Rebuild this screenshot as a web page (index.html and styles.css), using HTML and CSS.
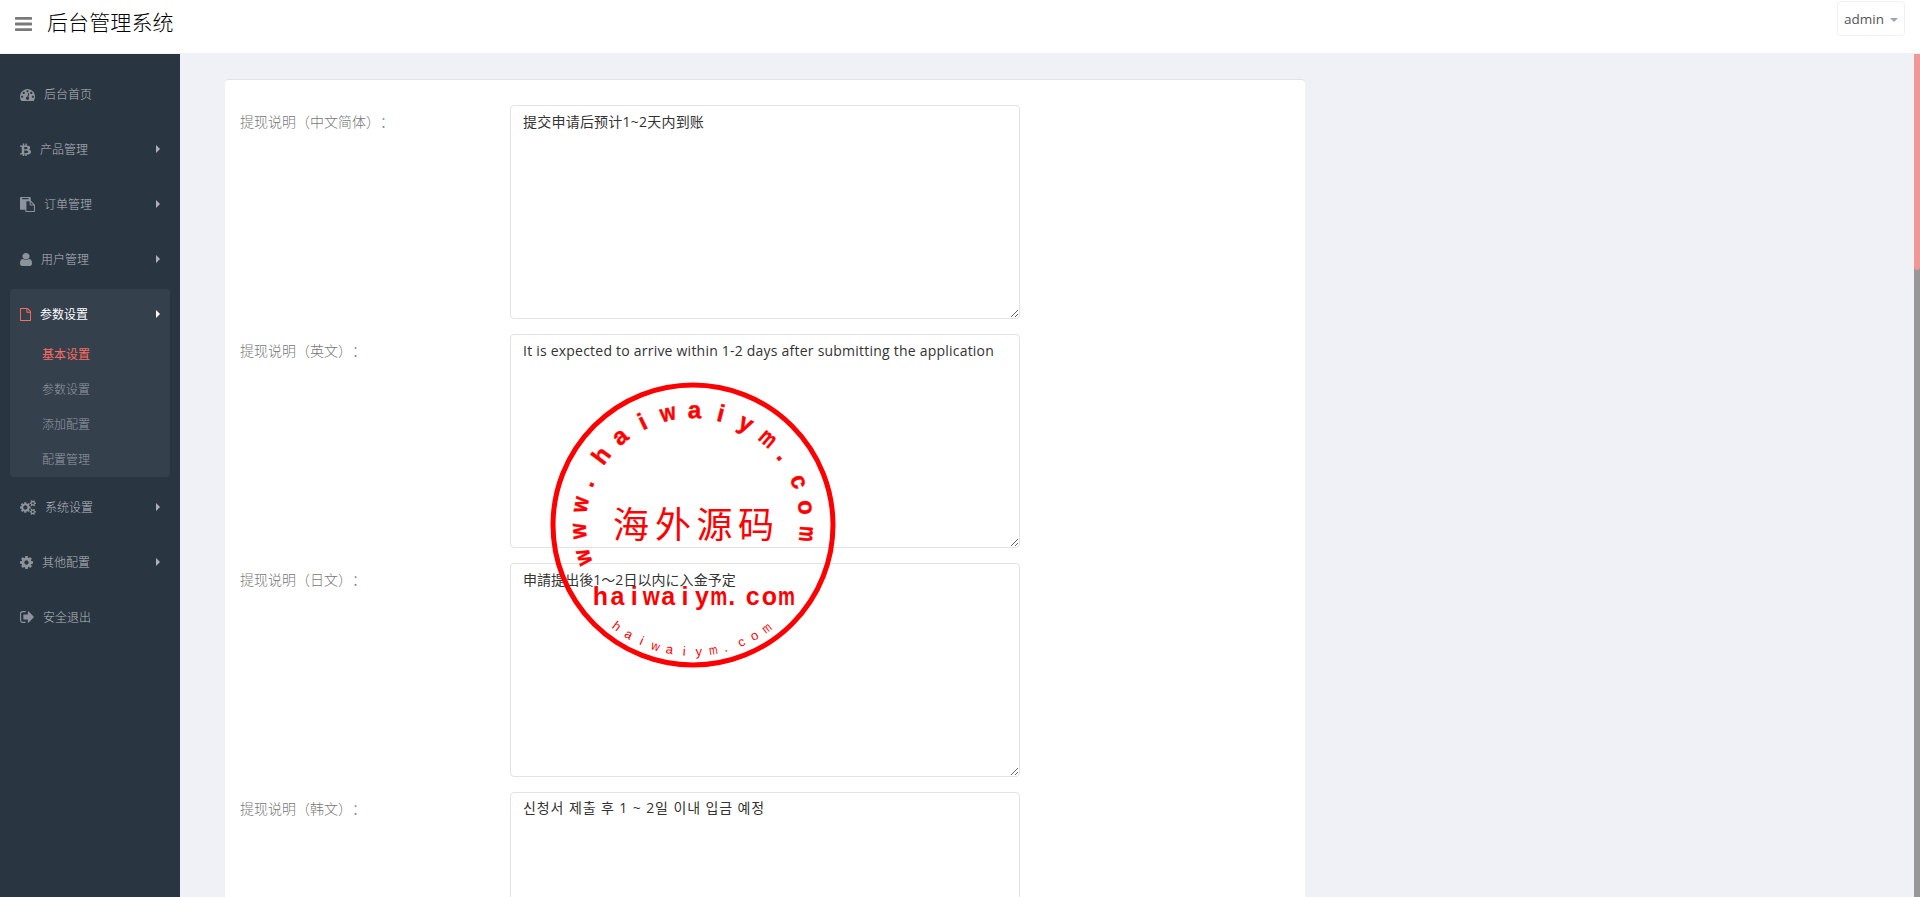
FILE: index.html
```html
<!DOCTYPE html>
<html lang="zh-CN">
<head>
  <meta charset="UTF-8">
  <title>后台管理系统</title>
  <link rel="stylesheet" href="styles.css">
</head>
<body>
  <header class="header">
    <svg class="toggle" viewBox="128 256 1536 1280" preserveAspectRatio="none"><path d="M1664 1344v128q0 26-19 45t-45 19h-1408q-26 0-45-19t-19-45v-128q0-26 19-45t45-19h1408q26 0 45 19t19 45zm0-512v128q0 26-19 45t-45 19h-1408q-26 0-45-19t-19-45v-128q0-26 19-45t45-19h1408q26 0 45 19t19 45zm0-512v128q0 26-19 45t-45 19h-1408q-26 0-45-19t-19-45v-128q0-26 19-45t45-19h1408q26 0 45 19t19 45z"/></svg>
    <div class="logo">后台管理系统</div>
    <div class="user-menu"><span class="username">admin</span><b class="caret"></b></div>
  </header>
  <div class="container">
    <aside class="sidebar">
      <ul class="menu">
        <li><a>
          <svg width="15" height="13" viewBox="0 128 1792 1536" preserveAspectRatio="none"><path d="M384 1152q0-53-37.5-90.5t-90.5-37.5-90.5 37.5-37.5 90.5 37.5 90.5 90.5 37.5 90.5-37.5 37.5-90.5zm192-448q0-53-37.5-90.5t-90.5-37.5-90.5 37.5-37.5 90.5 37.5 90.5 90.5 37.5 90.5-37.5 37.5-90.5zm428 481l101-382q6-26-7.5-48.5t-38.5-29.5-48 6.5-30 39.5l-101 382q-60 5-107 43.5t-63 98.5q-20 77 20 146t117 89 146-20 89-117q16-60-6-117t-72-91zm660-33q0-53-37.5-90.5t-90.5-37.5-90.5 37.5-37.5 90.5 37.5 90.5 90.5 37.5 90.5-37.5 37.5-90.5zm-640-640q0-53-37.5-90.5t-90.5-37.5-90.5 37.5-37.5 90.5 37.5 90.5 90.5 37.5 90.5-37.5 37.5-90.5zm448 192q0-53-37.5-90.5t-90.5-37.5-90.5 37.5-37.5 90.5 37.5 90.5 90.5 37.5 90.5-37.5 37.5-90.5zm320 448q0 261-141 483-19 29-54 29h-1402q-35 0-54-29-141-221-141-483 0-182 71-348t191-286 286-191 348-71 348 71 286 191 191 286 71 348z"/></svg>
          <span>后台首页</span></a></li>
        <li><a>
          <svg width="11" height="14" viewBox="300 0 1192 1792" preserveAspectRatio="none"><path d="M1399 711q18 182-131 258 117 28 175 103t45 214q-7 71-32.5 125t-64.5 89-97 58.5-121.5 34.5-145.5 15v255h-154v-251q-80 0-122-1v252h-154v-255q-18 0-54-.5t-55-.5h-200l31-183h111q50 0 58-51v-402h16q-6-1-16-1v-287q-13-68-89-68h-111v-164l212 1q64 0 97-1v-252h154v247q82-2 122-2v-245h154v252q79 7 140 22.5t113 45 82.5 78 36.5 114.5zm-215 545q0-36-15-64t-37-46-57.5-30.5-65.5-18.5-74-9-69-3-64.5 1-47.5 1v338q8 0 37 .5t48 .5 53-1.5 58.5-4 57-8.5 55.5-14 47.5-21 39.5-30 24.5-40 9.5-51zm-71-476q0-33-12.5-58.5t-30.5-42-48-28-55-16.5-61.5-8-58-2.5-54 1-39.5.5v307q5 0 34.5.5t46.5 0 50-2 55-5.5 51.5-11 48.5-18.5 37-27 27-38.5 9-51z"/></svg>
          <span>产品管理</span><i class="arrow"></i></a></li>
        <li><a>
          <svg width="15" height="15" viewBox="0 0 1792 1792"><path d="M768 1664h896v-640h-416q-40 0-68-28t-28-68v-416h-384v1152zm256-1440v-64q0-13-9.5-22.5t-22.5-9.5h-704q-13 0-22.5 9.5t-9.5 22.5v64q0 13 9.5 22.5t22.5 9.5h704q13 0 22.5-9.5t9.5-22.5zm256 672h299l-299-299v299zm512 128v672q0 40-28 68t-68 28h-960q-40 0-68-28t-28-68v-160h-544q-40 0-68-28t-28-68v-1344q0-40 28-68t68-28h1088q40 0 68 28t28 68v328q21 13 36 28l408 408q28 28 48 76t20 88z"/></svg>
          <span>订单管理</span><i class="arrow"></i></a></li>
        <li><a>
          <svg width="12" height="13" viewBox="256 128 1280 1536" preserveAspectRatio="none"><path d="M1536 1399q0 109-62.5 187t-150.5 78h-854q-88 0-150.5-78t-62.5-187q0-85 8.5-160.5t31.5-152 58.5-131 94-89 134.5-34.5q131 128 313 128t313-128q76 0 134.5 34.5t94 89 58.5 131 31.5 152 8.5 160.5zm-256-887q0 159-112.5 271.5t-271.5 112.5-271.5-112.5-112.5-271.5 112.5-271.5 271.5-112.5 271.5 112.5 112.5 271.5z"/></svg>
          <span>用户管理</span><i class="arrow"></i></a></li>
        <li class="active"><a>
          <svg width="11" height="13" viewBox="128 0 1536 1792" preserveAspectRatio="none"><path d="M1596 380q28 28 48 76t20 88v1152q0 40-28 68t-68 28h-1344q-40 0-68-28t-28-68v-1600q0-40 28-68t68-28h896q40 0 88 20t76 48zm-444-244v376h376q-10-29-22-41l-313-313q-12-12-41-22zm384 1528v-1024h-416q-40 0-68-28t-28-68v-416h-768v1536h1280z"/></svg>
          <span>参数设置</span><i class="arrow"></i></a>
          <ul class="sub">
            <li class="current">基本设置</li>
            <li>参数设置</li>
            <li>添加配置</li>
            <li>配置管理</li>
          </ul>
        </li>
        <li><a>
          <svg width="16" height="15" viewBox="0 0 1920 1792"><path d="M896 896q0-106-75-181t-181-75-181 75-75 181 75 181 181 75 181-75 75-181zm768 512q0-52-38-90t-90-38-90 38-38 90q0 53 37.500 90.500t90.500 37.500 90.500-37.500 37.500-90.500zm0-1024q0-52-38-90t-90-38-90 38-38 90q0 53 37.500 90.500t90.500 37.500 90.500-37.500 37.500-90.500zm-384 421v185q0 10-7 19.500t-16 10.500l-155 24q-11 35-32 76 34 48 90 115 7 11 7 20 0 12-7 19-23 30-82.500 89.500t-78.500 59.500q-11 0-21-7l-115-90q-37 19-77 31-11 108-23 155-7 24-30 24h-186q-11 0-20-7.500t-10-17.500l-23-153q-34-10-75-31l-118 89q-7 7-20 7-11 0-21-8-144-133-144-160 0-9 7-19 10-14 41-53t47-61q-23-44-35-82l-152-24q-10-1-17-9.500t-7-19.500v-185q0-10 7-19.500t16-10.500l155-24q11-35 32-76-34-48-90-115-7-11-7-20 0-12 7-20 22-30 82-89t79-59q11 0 21 7l115 90q34-18 77-32 11-108 23-154 7-24 30-24h186q11 0 20 7.500t10 17.500l23 153q34 10 75 31l118-89q8-7 20-7 11 0 21 8 144 133 144 160 0 8-7 19-12 16-42 54t-45 60q23 48 34 82l152 23q10 2 17 10.500t7 19.500zm640 533v140q0 16-149 31-12 27-30 52 51 113 51 138 0 4-4 7-122 71-124 71-8 0-46-47t-52-68q-20 2-30 2t-30-2q-14 21-52 68t-46 47q-2 0-124-71-4-3-4-7 0-25 51-138-18-25-30-52-149-15-149-31v-140q0-16 149-31 13-29 30-52-51-113-51-138 0-4 4-7 4-2 35-20t59-34 30-16q8 0 46 46.500t52 67.500q20-2 30-2t30 2q51-71 92-112l6-2q4 0 124 70 4 3 4 7 0 25-51 138 17 23 30 52 149 15 149 31zm0-1024v140q0 16-149 31-12 27-30 52 51 113 51 138 0 4-4 7-122 71-124 71-8 0-46-47t-52-68q-20 2-30 2t-30-2q-14 21-52 68t-46 47q-2 0-124-71-4-3-4-7 0-25 51-138-18-25-30-52-149-15-149-31v-140q0-16 149-31 13-29 30-52-51-113-51-138 0-4 4-7 4-2 35-20t59-34 30-16q8 0 46 46.500t52 67.500q20-2 30-2t30 2q51-71 92-112l6-2q4 0 124 70 4 3 4 7 0 25-51 138 17 23 30 52 149 15 149 31z"/></svg>
          <span>系统设置</span><i class="arrow"></i></a></li>
        <li><a>
          <svg width="13" height="13" viewBox="128 128 1536 1536"><path d="M1152 896q0-106-75-181t-181-75-181 75-75 181 75 181 181 75 181-75 75-181zm512-109v222q0 12-8 23t-20 13l-185 28q-19 54-39 91 35 50 107 138 10 12 10 25t-9 23q-27 37-99 108t-94 71q-12 0-26-9l-138-108q-44 23-91 38-16 136-29 186-7 28-36 28h-222q-14 0-24.500-8.500t-11.500-21.500l-28-184q-49-16-90-37l-141 107q-10 9-25 9-14 0-25-11-126-114-165-168-7-10-7-23 0-12 8-23 15-21 51-66.500t54-70.500q-27-50-41-99l-183-27q-13-2-21-12.500t-8-23.500v-222q0-12 8-23t19-13l186-28q14-46 39-92-40-57-107-138-10-12-10-24 0-10 9-23 26-36 98.500-107.500t94.500-71.500q13 0 26 10l138 107q44-23 91-38 16-136 29-186 7-28 36-28h222q14 0 24.500 8.500t11.500 21.500l28 184q49 16 90 37l142-107q9-9 24-9 13 0 25 10 129 119 165 170 7 8 7 22 0 12-8 23-15 21-51 66.500t-54 70.500q26 50 41 98l183 28q13 2 21 12.500t8 23.500z"/></svg>
          <span>其他配置</span><i class="arrow"></i></a></li>
        <li><a>
          <svg width="14" height="12" viewBox="64 256 1600 1280" preserveAspectRatio="none"><path d="M704 1440q0 4 1 20t.5 26.500-3 23.500-10 19.500-20.500 6.500h-320q-119 0-203.500-84.500t-84.500-203.500v-704q0-119 84.500-203.500t203.500-84.500h320q13 0 22.500 9.500t9.500 22.500q0 4 1 20t.5 26.500-3 23.500-10 19.500-20.500 6.500h-320q-66 0-113 47t-47 113v704q0 66 47 113t113 47h312l11.500 1 11.500 3 8 5.500 7 9 2 13.500zm928-544q0 26-19 45l-544 544q-19 19-45 19t-45-19-19-45v-288h-448q-26 0-45-19t-19-45v-384q0-26 19-45t45-19h448v-288q0-26 19-45t45-19 45 19l544 544q19 19 19 45z"/></svg>
          <span>安全退出</span></a></li>
      </ul>
    </aside>
    <main class="content">
      <form class="panel">
        <div class="form-group">
          <label>提现说明（中文简体）：</label>
          <textarea spellcheck="false">提交申请后预计1~2天内到账</textarea>
        </div>
        <div class="form-group">
          <label>提现说明（英文）：</label>
          <textarea class="en" spellcheck="false">It is expected to arrive within 1-2 days after submitting the application</textarea>
        </div>
        <div class="form-group">
          <label>提现说明（日文）：</label>
          <textarea class="ja" spellcheck="false">申請提出後1～2日以内に入金予定</textarea>
        </div>
        <div class="form-group">
          <label>提现说明（韩文）：</label>
          <textarea class="ko" spellcheck="false">신청서 제출 후 1 ~ 2일 이내 입금 예정</textarea>
        </div>
      </form>
    </main>
    <div class="scroll-rail"><div class="scroll-thumb"></div></div>
  </div>
  <svg class="stamp" id="stamp" width="286" height="286" viewBox="-143 -143 286 286">
    <circle r="140"/>
    <text class="stamp-name" x="-62 -20 21.500 63" y="13">海外源码</text>
  </svg>
  <script src="script.js"></script>
</body>
</html>
```
FILE: styles.css
```css
* {
  box-sizing: border-box;
}
body {
  margin: 0;
  height: 897px;
  overflow: hidden;
  display: flex;
  flex-direction: column;
  font-family: "Open Sans", "Noto Sans CJK SC", sans-serif;
  font-size: 14px;
  color: #333;
  background: #f0f1f7;
}
ul {
  list-style: none;
  margin: 0;
  padding: 0;
}
.header {
  flex: none;
  height: 54px;
  display: flex;
  align-items: flex-start;
  padding: 0 15px;
  background: #fff;
  border-bottom: 1px solid #f0f1f7;
}
.toggle {
  width: 17px;
  height: 14px;
  margin-top: 17px;
  fill: #797979;
}
.logo {
  margin-left: 15px;
  font-size: 21px;
  font-weight: 300;
  letter-spacing: 0.1px;
  line-height: 30px;
  margin-top: 7px;
  color: #000;
}
.user-menu {
  display: flex;
  align-items: center;
  justify-content: space-between;
  width: 68px;
  height: 35px;
  margin: 1px 0 0 auto;
  padding: 0 6px;
  border: 1px solid #f0f1f7;
  border-radius: 4px;
}
.username {
  font-size: 13.5px;
  line-height: 18px;
  margin-top: 1px;
  color: #555;
}
.caret {
  border-top: 4px solid #a0a3b8;
  border-left: 4px solid transparent;
  border-right: 4px solid transparent;
  margin-top: 3px;
}
.container {
  flex: 1;
  min-height: 0;
  display: flex;
  overflow: hidden;
}
.sidebar {
  width: 180px;
  padding: 15px 10px 0;
  background: #2a3542;
}
.menu > li {
  margin-bottom: 5px;
  border-radius: 4px;
}
.menu a {
  display: flex;
  align-items: center;
  height: 50px;
  padding: 0 10px;
  color: #b4b9be;
  font-size: 12px;
  font-weight: 300;
}
.menu svg {
  flex: none;
  fill: #8d939a;
}
.menu a span {
  margin-left: 9px;
}
.arrow {
  margin-left: auto;
  border-left: 4px solid #aeb2b7;
  border-top: 4px solid transparent;
  border-bottom: 4px solid transparent;
}
.menu .active {
  background: #35404d;
}
.menu .active a {
  color: #fff;
  font-weight: 400;
}
.menu .active svg {
  fill: #ff6c60;
}
.active .arrow {
  border-left-color: #fff;
}
.sub {
  margin-top: -2px;
}
.sub li {
  height: 35px;
  line-height: 36px;
  padding-left: 32px;
  font-size: 12px;
  font-weight: 300;
  color: #949ba2;
}
.sub .current {
  color: #ff6c60;
  font-weight: 400;
}
.content {
  flex: 1;
  padding: 25px 45px 0;
  overflow: hidden;
}
.panel {
  width: 1080px;
  height: 960px;
  padding: 25px 15px;
  background: #fff;
  border-top: 1px solid #e2e3e8;
  border-radius: 4px;
}
.form-group {
  display: flex;
  margin-bottom: 15px;
}
.form-group label {
  width: 270px;
  padding-top: 6px;
  line-height: 20px;
  font-family: "Noto Sans CJK SC", sans-serif;
  font-weight: 300;
  text-spacing-trim: space-all;
  color: #777;
}
textarea {
  width: 510px;
  height: 214px;
  padding: 6px 12px;
  border: 1px solid #e2e2e4;
  border-radius: 4px;
  font-family: "Open Sans", "Noto Sans CJK SC", sans-serif;
  font-size: 14px;
  line-height: 20px;
  letter-spacing: 0.22px;
  color: #333;
  background: #fff;
  resize: both;
}
.ja {
  font-family: "Open Sans", "Noto Sans CJK JP", sans-serif;
  letter-spacing: 0.05px;
}
.ko {
  padding-top: 5px;
  font-family: "Open Sans", "Noto Sans CJK KR", sans-serif;
  letter-spacing: 0.9px;
}
.scroll-rail {
  width: 6px;
  background: #979797;
}
.scroll-thumb {
  height: 216px;
  background: #f09898;
  border-radius: 0 0 3px 3px;
}
.stamp {
  position: absolute;
  left: 549.5px;
  top: 382px;
  pointer-events: none;
}
.stamp circle {
  fill: none;
  stroke: #f00;
  stroke-width: 5;
}
.stamp text {
  fill: #f00;
  text-anchor: middle;
  font-family: "Liberation Sans", sans-serif;
}
.stamp .stamp-name {
  font-family: "Noto Sans CJK SC", sans-serif;
  font-size: 36px;
}
.stamp .big {
  font-size: 24px;
  font-weight: bold;
  stroke: #f00;
  stroke-width: 0.5;
}
.stamp .site {
  font-size: 25px;
  font-weight: bold;
}
.stamp .small {
  font-size: 13px;
}
```
FILE: script.js
```js
const stamp = document.getElementById('stamp');

// one letter of the stamp, squeezed to the cell when it is a wide one
function addLetter(ch, cls, transform, wide) {
  const t = document.createElementNS('http://www.w3.org/2000/svg', 'text');
  t.textContent = ch;
  t.setAttribute('class', cls);
  t.setAttribute('transform', transform);
  if (ch === 'w' || ch === 'm') {
    t.setAttribute('textLength', wide);
    t.setAttribute('lengthAdjust', 'spacingAndGlyphs');
  }
  stamp.appendChild(t);
}

[...'www.haiwaiym.com'].forEach((ch, i) => {
  const turn = ch === '.' ? -2 : 0;
  addLetter(ch, 'big', `rotate(${-106.5 + i * 13.4 + turn}) translate(0 -107)`, 15.5);
});

[...'haiwaiym.com'].forEach((ch, i) => {
  const dx = ch === '.' ? -4 : 0;
  addLetter(ch, 'site', `translate(${-92.5 + i * 16.9 + dx} 80)`, 17);
});

[...'haiwaiym.com'].forEach((ch, i) => {
  const turn = ch === '.' ? 1 : 0;
  addLetter(ch, 'small', `rotate(${37 - i * 6.6 + turn}) translate(0 131)`, 8.5);
});
```
